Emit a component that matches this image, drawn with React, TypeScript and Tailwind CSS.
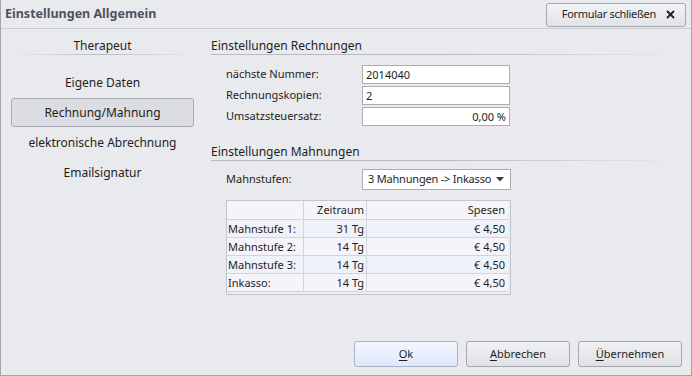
// Dialog "Einstellungen Allgemein" – Rechnung/Mahnung
import React from 'react';

const navItems = [
  { label: 'Eigene Daten', active: false },
  { label: 'Rechnung/Mahnung', active: true },
  { label: 'elektronische Abrechnung', active: false },
  { label: 'Emailsignatur', active: false },
];

const rows = [
  { name: 'Mahnstufe 1:', zeit: '31 Tg', spesen: '€ 4,50' },
  { name: 'Mahnstufe 2:', zeit: '14 Tg', spesen: '€ 4,50' },
  { name: 'Mahnstufe 3:', zeit: '14 Tg', spesen: '€ 4,50' },
  { name: 'Inkasso:', zeit: '14 Tg', spesen: '€ 4,50' },
];

const Field: React.FC<{ label: string; value: string; right?: boolean }> = ({ label, value, right }) => (
  <div className="flex items-center h-[21px]">
    <span className="w-[136px]">{label}</span>
    <div
      className={`w-[148px] h-[19px] bg-white border border-[#abadb3] px-[3px] leading-[17px] ${right ? 'text-right' : ''}`}
    >
      {value}
    </div>
  </div>
);

const SectionTitle: React.FC<{ children: React.ReactNode }> = ({ children }) => (
  <div className="pl-[5px]">
    <div className="text-[12px] leading-[16px] text-[#1e1e1e]">{children}</div>
    <div className="h-px bg-gradient-to-r from-[#b9bac0] via-[#b9bac0] to-transparent" />
  </div>
);

const DialogButton: React.FC<{ u: string; rest: string; primary?: boolean }> = ({ u, rest, primary }) => (
  <button
    className={`w-[104px] h-[26px] rounded-[3px] border ${
      primary ? 'border-[#a9b3c8] bg-gradient-to-b from-[#f2f6fe] to-[#dfe8fa]' : 'border-[#a5a7af] bg-gradient-to-b from-[#f0f1f4] to-[#e0e1e6]'
    } text-[11px] text-[#1e1e1e]`}
  >
    <span className="underline underline-offset-2">{u}</span>
    {rest}
  </button>
);

export default function App() {
  return (
    <div
      className="w-[692px] h-[376px] bg-[#e9eaee] border-l border-r border-b border-[#a3a4ac] flex flex-col text-[11px] text-[#1e1e1e] overflow-hidden"
      style={{ fontFamily: '"Noto Sans", "Open Sans", sans-serif' }}
    >
      {/* Titelleiste */}
      <div className="h-[29px] flex items-center justify-between pl-[4px] pr-[5px] border-b border-[#c9cad0]">
        <span className="text-[12.5px] font-bold text-[#4e535e]">Einstellungen Allgemein</span>
        <button className="w-[140px] h-[24px] mt-[1px] rounded-[3px] border border-[#a5a7af] bg-gradient-to-b from-[#f2f3f5] to-[#e2e3e7] flex items-center justify-end pr-[10px] gap-[10px] whitespace-nowrap">
          <span className="tracking-[-0.3px]">Formular schließen</span>
          <svg width="9" height="9" viewBox="0 0 9 9">
            <path d="M1 1L8 8M8 1L1 8" stroke="#1e1e1e" strokeWidth="1.8" />
          </svg>
        </button>
      </div>

      <div className="flex flex-1">
        {/* Navigation links */}
        <div className="w-[205px] pl-[10px] pr-[12px] pt-[9px]">
          <div className="text-center text-[12px] leading-[16px]">Therapeut</div>
          <div className="h-px bg-gradient-to-r from-transparent via-[#b9bac0] to-transparent" />
          <div className="mt-[13px] flex flex-col gap-px">
            {navItems.map((item) => (
              <div
                key={item.label}
                className={`h-[29px] flex items-center justify-center text-[12px] rounded-[3px] border ${
                  item.active ? 'border-[#a9abb3] bg-[#dcdde2]' : 'border-transparent'
                }`}
              >
                {item.label}
              </div>
            ))}
          </div>
        </div>

        {/* Einstellungen rechts */}
        <div className="flex-1 pt-[9px] pr-[8px] flex flex-col">
          <SectionTitle>Einstellungen Rechnungen</SectionTitle>
          <div className="pl-[20px] mt-[9px] flex flex-col">
            <Field label="nächste Nummer:" value="2014040" />
            <Field label="Rechnungskopien:" value="2" />
            <Field label="Umsatzsteuersatz:" value="0,00 %" right />
          </div>

          <div className="mt-[17px]">
            <SectionTitle>Einstellungen Mahnungen</SectionTitle>
          </div>
          <div className="pl-[20px] mt-[8px] flex items-center">
            <span className="w-[136px]">Mahnstufen:</span>
            <div className="w-[149px] h-[21px] bg-white border border-[#abadb3] flex items-center justify-between pl-[5px] pr-[6px] whitespace-nowrap">
              <span className="tracking-[-0.2px]">3 Mahnungen -&gt; Inkasso</span>
              <svg width="8" height="5" viewBox="0 0 8 5">
                <path d="M0 0H8L4 4.5Z" fill="#3c3c3c" />
              </svg>
            </div>
          </div>

          {/* Tabelle */}
          <div className="ml-[20px] mt-[10px] w-[285px] border border-[#c2c4cc] bg-[#eceef3] pb-[2px] pr-[2px]">
            <div className="grid grid-cols-[77px_63px_141px] h-[19px] bg-[#f5f5f8] border-b border-[#d2d4dc]">
              <div className="border-r border-[#d2d4dc]" />
              <div className="border-r border-[#d2d4dc] text-right pr-[2px] leading-[18px]">Zeitraum</div>
              <div className="text-right pr-[3px] leading-[18px]">Spesen</div>
            </div>
            {rows.map((r, i) => (
              <div
                key={r.name}
                className={`grid grid-cols-[77px_63px_141px] h-[18px] border-b border-[#d2d4dc] leading-[17px] ${
                  i % 2 === 0 ? 'bg-[#eef2f9]' : 'bg-[#f6f3fb]'
                }`}
              >
                <div className="border-r border-[#d2d4dc] pl-[1px]">{r.name}</div>
                <div className="border-r border-[#d2d4dc] text-right pr-[2px]">{r.zeit}</div>
                <div className="text-right pr-[3px]">{r.spesen}</div>
              </div>
            ))}
          </div>

          <div className="flex-1" />
          <div className="flex justify-end gap-[8px] pb-[8px] pr-[1px]">
            <DialogButton u="O" rest="k" primary />
            <DialogButton u="A" rest="bbrechen" />
            <DialogButton u="Ü" rest="bernehmen" />
          </div>
        </div>
      </div>
    </div>
  );
}
